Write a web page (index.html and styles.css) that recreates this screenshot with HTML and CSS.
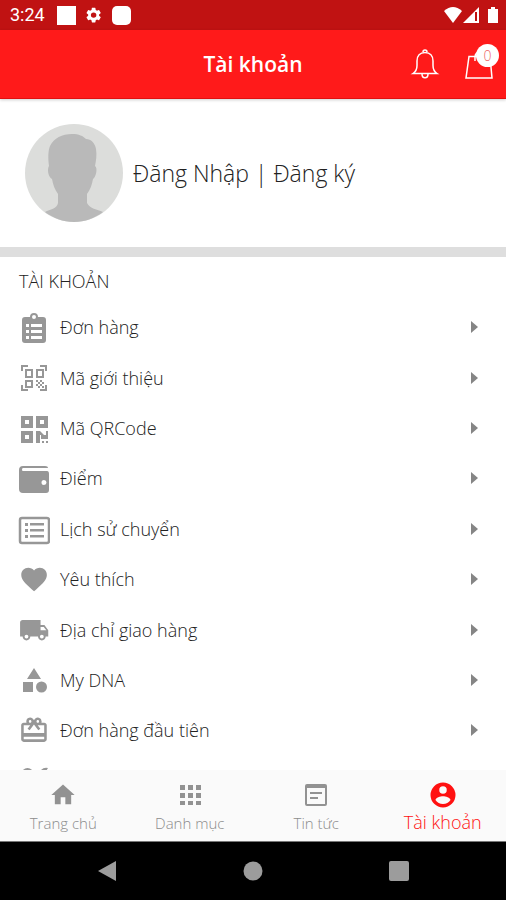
FILE: index.html
```html
<!DOCTYPE html>
<html lang="vi">
<head>
<meta charset="utf-8">
<meta name="viewport" content="width=device-width, initial-scale=1">
<title>Tài khoản</title>
<link rel="stylesheet" href="styles.css">
</head>
<body>
<div class="status">
  <time class="clock">3:24</time>
  <svg class="status-left" width="76" height="20" viewBox="0 0 76 20" aria-hidden="true">
    <rect x="1" y="1" width="19" height="19"/>
    <path transform="translate(28.5 1) scale(.76)" d="M19.14 12.94c.04-.3.06-.61.06-.94 0-.32-.02-.64-.07-.94l2.03-1.58a.49.49 0 0 0 .12-.61l-1.92-3.32a.49.49 0 0 0-.59-.22l-2.39.96c-.5-.38-1.03-.7-1.62-.94l-.36-2.54a.48.48 0 0 0-.48-.41h-3.84c-.24 0-.43.17-.47.41l-.36 2.54c-.59.24-1.13.57-1.62.94l-2.39-.96a.48.48 0 0 0-.59.22L2.74 8.87c-.12.21-.08.47.12.61l2.03 1.58c-.05.3-.09.63-.09.94s.02.64.07.94l-2.03 1.58a.49.49 0 0 0-.12.61l1.92 3.32c.12.22.37.29.59.22l2.39-.96c.5.38 1.03.7 1.62.94l.36 2.54c.05.24.24.41.48.41h3.84c.24 0 .44-.17.47-.41l.36-2.54c.59-.24 1.13-.56 1.62-.94l2.39.96c.22.08.47 0 .59-.22l1.92-3.32a.48.48 0 0 0-.12-.61l-2.01-1.58zM12 15.6A3.6 3.6 0 1 1 12 8.400a3.600 3.600 0 0 1 0 7.200z"/>
    <rect x="56" y="1" width="19" height="19" rx="5"/>
  </svg>
  <svg class="status-right" width="56" height="18" viewBox="0 0 56 18" aria-hidden="true">
    <path d="M1 5Q10-3 19 5L10 17z"/>
    <path fill-rule="evenodd" d="M36 1v16H20zM34 6h-2v9h2z"/>
    <path d="M45 3h3V1h4v2h3v14H45z"/>
  </svg>
</div>
<header class="bar">
  <h1>Tài khoản</h1>
  <div class="actions">
    <button type="button" aria-label="Thông báo">
      <svg width="28" height="32" viewBox="0 0 28 32" class="line"><path d="M11 4a2 2 0 1 1 4 0M1 25.500c3-2 4-4 4-8V13c0-5 3-8.500 8-8.500s8 3.500 8 8.500v4.500c0 4 1 6 4 8zM10 26c0 5 6 5 6 0"/></svg>
    </button>
    <button type="button" aria-label="Giỏ hàng">
      <svg width="28" height="32" viewBox="0 0 28 32" class="line"><path d="M3 8.500h21l2 21.500H0zM9 13V9c0-7 10-7 10 0v4"/></svg>
      <span class="badge">0</span>
    </button>
  </div>
</header>
<section class="profile">
  <svg class="avatar" width="98" height="98" viewBox="0 0 98 98" aria-hidden="true">
    <circle cx="49" cy="49" r="49" fill="#dcdddb"/>
    <path fill="#b9b9b9" d="M20 88c5-3 12-3 13-9V70c-3-4-5-9-6-15-4-2-5-10-3-13-1-8-1-15 1-20 4-8 12-12 22-12 7 0 11 2 14 5 5 0 9 4 10 10 1 6 0 12-1 17 3 2 1 11-2 13-1 6-3 11-6 15v9c3 6 10 6 16 9-8 6-18 10-29 10s-21-4-29-10z"/>
  </svg>
  <p><a href="#login">Đăng Nhập</a> | <a href="#register">Đăng ký</a></p>
</section>
<main class="account">
  <h2>TÀI KHOẢN</h2>
  <ul class="menu">
    <li><a href="#orders">
      <svg class="icon" viewBox="0 0 32 32"><path fill-rule="evenodd" d="M7 6h5a4 4 0 0 1 8 0h5q3 0 3 3v20q0 3-3 3H7q-3 0-3-3V9q0-3 3-3zm9-2a2 2 0 1 0 0 4 2 2 0 0 0 0-4zM8 13v3h3v-3zm5 0v3h11v-3zM8 19v3h3v-3zm5 0v3h11v-3zM8 25v3h3v-3zm5 0v3h11v-3z"/></svg>
      <span>Đơn hàng</span><i></i></a></li>
    <li><a href="#referral">
      <svg class="icon" viewBox="0 0 32 32"><g fill="none" stroke="#979797" stroke-width="2"><path d="M4 9V4h6M22 4h6v5M4 23v5h6M22 28h6v-5M8 8h6v7H8zM19 8h6v7h-6zM8 19h6v6H8z"/></g><path d="M18 18h2v2h-2zM22 18h2v2h-2zM20 20h2v2h-2zM24 20h2v2h-2zM18 22h2v2h-2zM22 22h2v2h-2zM20 24h2v2h-2zM24 24h2v2h-2z"/></svg>
      <span>Mã giới thiệu</span><i></i></a></li>
    <li><a href="#qrcode">
      <svg class="icon" viewBox="0 0 32 32"><path fill-rule="evenodd" d="M3 4h12v12H3zm4 4v4h4V8zM18 4h12v12H18zm4 4v4h4V8zM3 19h12v12H3zm4 4v4h4v-4zM18 19h4l4 4h2v-4h2v8h-7v-4h-1v8h-4zM24 29h2v2h-2zM28 29h2v2h-2z"/></svg>
      <span>Mã QRCode</span><i></i></a></li>
    <li><a href="#points">
      <svg class="icon" viewBox="0 0 32 32"><path fill-rule="evenodd" d="M5 4h22q3 0 3 2H5q-1 0-1 1.500T5 9h24q2 0 2 3v16q0 3-3 3H5q-4 0-4-4V8q0-4 4-4zm21 14a2.500 2.500 0 1 0 0 5 2.500 2.500 0 0 0 0-5z"/></svg>
      <span>Điểm</span><i></i></a></li>
    <li><a href="#history">
      <svg class="icon" viewBox="0 0 32 32"><rect x="2" y="5" width="29" height="25" rx="2" fill="none" stroke="#979797" stroke-width="2.500"/><path d="M7 10h3v3H7zM12 10h14v2.500H12zM7 16h3v3H7zM12 16h14v2.500H12zM7 22h3v3H7zM12 22h14v2.500H12z"/></svg>
      <span>Lịch sử chuyển</span><i></i></a></li>
    <li><a href="#favorites">
      <svg class="icon" viewBox="0 0 32 32"><path transform="translate(.7 1) scale(1.280)" d="M12 21.350l-1.450-1.320C5.400 15.360 2 12.280 2 8.500 2 5.420 4.420 3 7.500 3c1.740 0 3.410.81 4.500 2.090C13.090 3.810 14.760 3 16.500 3 19.580 3 22 5.420 22 8.500c0 3.780-3.400 6.860-8.550 11.540z"/></svg>
      <span>Yêu thích</span><i></i></a></li>
    <li><a href="#addresses">
      <svg class="icon" viewBox="0 0 32 32"><path transform="translate(.8 .8) scale(1.280)" d="M20 8h-3V4H3c-1.100 0-2 .9-2 2v11h2c0 1.660 1.340 3 3 3s3-1.340 3-3h6c0 1.660 1.340 3 3 3s3-1.340 3-3h2v-5zM6 18.500a1.500 1.500 0 1 1 0-3 1.500 1.500 0 0 1 0 3zm13.500-9 1.960 2.500H17V9.500zm-1.500 9a1.500 1.500 0 1 1 0-3 1.500 1.500 0 0 1 0 3z"/></svg>
      <span>Địa chỉ giao hàng</span><i></i></a></li>
    <li><a href="#dna">
      <svg class="icon" viewBox="0 0 32 32"><path d="M16 4l7 11H9zM5 18h10v10H5z"/><circle cx="23.500" cy="23" r="5.500"/></svg>
      <span>My DNA</span><i></i></a></li>
    <li><a href="#first-order">
      <svg class="icon" viewBox="0 0 32 32"><path transform="translate(.6 1) scale(1.280)" d="M20 6h-2.180c.11-.31.18-.65.18-1a3 3 0 0 0-5.500-1.650l-.5.670-.5-.68A3 3 0 0 0 6 5c0 .35.070.69.180 1H4c-1.110 0-1.990.89-1.990 2L2 19c0 1.110.89 2 2 2h16c1.110 0 2-.89 2-2V8c0-1.110-.89-2-2-2zm-5-2c.55 0 1 .45 1 1s-.45 1-1 1-1-.45-1-1 .45-1 1-1zM9 4c.55 0 1 .45 1 1s-.45 1-1 1-1-.45-1-1 .45-1 1-1zm11 15H4v-2h16zm0-5H4V8h5.080L7 10.830 8.620 12 12 7.400l3.380 4.600L17 10.830 14.920 8H20z"/></svg>
      <span>Đơn hàng đầu tiên</span><i></i></a></li>
    <li><a href="#more" aria-label="Khác">
      <svg class="icon" viewBox="0 0 32 32"><circle cx="9.500" cy="9" r="6"/><path d="M9 26L23 5q3-3 7-2L14 28z"/><circle cx="24" cy="24" r="6"/></svg></a></li>
  </ul>
</main>
<nav class="tabs">
  <a href="#home"><svg width="28" height="28" viewBox="0 0 24 24"><path d="M10 20v-6h4v6h5v-8h3L12 3 2 12h3v8z"/></svg><span>Trang chủ</span></a>
  <a href="#categories"><svg width="28" height="28" viewBox="0 0 28 28"><path d="M4 4h5v5H4zM12 4h5v5h-5zM20 4h5v5h-5zM4 12h5v5H4zM12 12h5v5h-5zM20 12h5v5h-5zM4 20h5v4H4zM12 20h5v4h-5zM20 20h5v4h-5z"/></svg><span>Danh mục</span></a>
  <a href="#news"><svg width="28" height="28" viewBox="0 0 28 28"><path fill-rule="evenodd" d="M5 3h18q2 0 2 2v18q0 2-2 2H5q-2 0-2-2V5q0-2 2-2zm0 4v16h18V7zM8 11h12v2H8zM8 16h8v2H8z"/></svg><span>Tin tức</span></a>
  <a href="#account" class="active" aria-current="page"><svg width="30" height="30" viewBox="0 0 24 24"><path d="M12 2a10 10 0 1 0 0 20 10 10 0 0 0 0-20zm0 3a3 3 0 1 1 0 6 3 3 0 0 1 0-6zm0 14.200a7.200 7.200 0 0 1-6-3.220c.03-1.990 4-3.080 6-3.080s5.970 1.090 6 3.080a7.200 7.200 0 0 1-6 3.220z"/></svg><span>Tài khoản</span></a>
</nav>
<footer class="system">
  <button type="button" aria-label="Quay lại"><svg width="22" height="22" viewBox="0 0 22 22"><path d="M20 1v20L2 11z"/></svg></button>
  <button type="button" aria-label="Màn hình chính"><svg width="22" height="22" viewBox="0 0 22 22"><circle cx="11" cy="11" r="9.500"/></svg></button>
  <button type="button" aria-label="Gần đây"><svg width="22" height="22" viewBox="0 0 22 22"><rect x="1" y="1" width="20" height="20" rx="2"/></svg></button>
</footer>
</body>
</html>
```

FILE: styles.css
```css
* { box-sizing: border-box; margin: 0; padding: 0; }
body {
  display: flex;
  flex-direction: column;
  height: 100vh;
  overflow: hidden;
  background: #fff;
  color: #222;
  font-family: "Open Sans", "Noto Sans", sans-serif;
  font-weight: 300;
}
a { color: inherit; text-decoration: none; }
button { border: 0; background: none; color: inherit; font: inherit; }
svg { display: block; flex: none; }

.status {
  display: flex;
  flex: none;
  align-items: center;
  height: 30px;
  padding: 0 7px 0 10px;
  background: #c01212;
  color: #fff;
  fill: #fff;
}
.clock { font: 400 18px/30px Roboto, sans-serif; }
.status-left { margin-left: 11px; }
.status-right { margin-left: auto; }

.bar {
  display: grid;
  flex: none;
  grid-template-columns: 1fr auto 1fr;
  align-items: center;
  height: 69px;
  padding: 0 12px;
  border-bottom: 1px solid #e01010;
  background: #ff1a1a;
  box-shadow: 0 1px 3px #0003;
  color: #fff;
}
.bar h1 { grid-column: 2; font-size: 21px; font-weight: 600; line-height: 30px; }
.actions { display: flex; gap: 26px; justify-content: flex-end; }
.actions button { position: relative; }
.line { fill: none; stroke: #fff; stroke-width: 1.5; overflow: visible; }
.badge {
  position: absolute;
  top: -4px;
  right: -5px;
  width: 23px;
  height: 23px;
  border-radius: 50%;
  background: #fff;
  color: #e66;
  font-size: 14px;
  line-height: 23px;
  text-align: center;
}

.profile {
  display: flex;
  flex: none;
  align-items: center;
  gap: 10px;
  height: 158px;
  padding: 0 25px;
  border-bottom: 10px solid #dedede;
}
.profile p { font-size: 23px; line-height: 32px; }

.account { flex: 1; min-height: 0; overflow: hidden; }
.account h2 { padding: 9px 19px 6px; font-size: 18px; font-weight: 300; line-height: 30px; }
.menu { display: flex; flex-direction: column; height: 504px; list-style: none; }
.menu li { flex: 1; }
.menu a {
  display: flex;
  align-items: center;
  gap: 10px;
  height: 100%;
  padding: 0 28px 0 18px;
  font-size: 18px;
  line-height: 24px;
}
.icon { width: 32px; height: 32px; fill: #979797; }
.menu i {
  margin-left: auto;
  border: solid transparent;
  border-width: 6px 0 6px 7px;
  border-left-color: #858585;
}

.tabs {
  display: grid;
  flex: none;
  grid-template-columns: repeat(4, 1fr);
  height: 72px;
  border-bottom: 1px solid #777;
  background: #fafafa;
  color: #8c8c8c;
  fill: #929292;
  font-size: 15px;
}
.tabs a { display: flex; flex-direction: column; align-items: center; padding-top: 11px; gap: 4px; line-height: 20px; }
.tabs .active { padding-top: 10px; gap: 0; color: #f11; fill: #f11; font-size: 18px; line-height: 24px; }

.system {
  display: flex;
  flex: none;
  align-items: center;
  justify-content: space-between;
  height: 58px;
  padding: 0 96px;
  background: #000;
  fill: #9c9c9c;
}
```
